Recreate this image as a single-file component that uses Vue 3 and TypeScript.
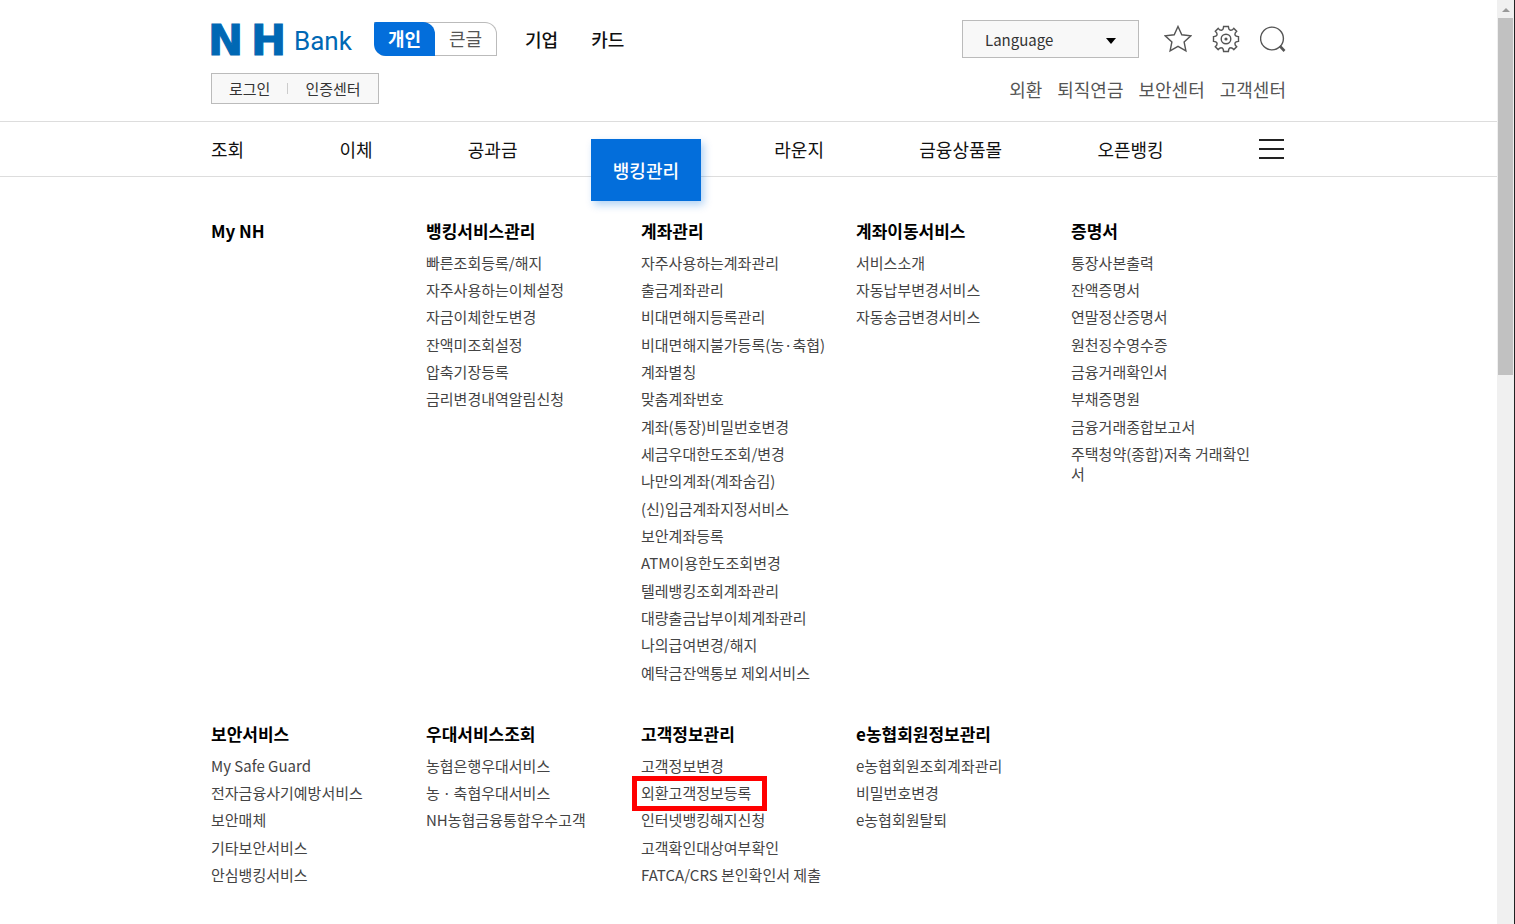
<script setup lang="ts">
import { ref } from 'vue'

interface MenuSection {
  title: string
  items: string[]
}

const language = ref('Language')
const utilityLinks: string[] = ['외환', '퇴직연금', '보안센터', '고객센터']
const mainMenu: string[] = ['조회', '이체', '공과금', '뱅킹관리', '라운지', '금융상품몰', '오픈뱅킹']
const activeMenu = '뱅킹관리'
const markedItem = '외환고객정보등록'

const sections: MenuSection[] = [
  { title: 'My NH', items: [] },
  {
    title: '뱅킹서비스관리',
    items: ['빠른조회등록/해지', '자주사용하는이체설정', '자금이체한도변경', '잔액미조회설정', '압축기장등록', '금리변경내역알림신청'],
  },
  {
    title: '계좌관리',
    items: [
      '자주사용하는계좌관리', '출금계좌관리', '비대면해지등록관리', '비대면해지불가등록(농·축협)',
      '계좌별칭', '맞춤계좌번호', '계좌(통장)비밀번호변경', '세금우대한도조회/변경',
      '나만의계좌(계좌숨김)', '(신)입금계좌지정서비스', '보안계좌등록', 'ATM이용한도조회변경',
      '텔레뱅킹조회계좌관리', '대량출금납부이체계좌관리', '나의급여변경/해지', '예탁금잔액통보 제외서비스',
    ],
  },
  { title: '계좌이동서비스', items: ['서비스소개', '자동납부변경서비스', '자동송금변경서비스'] },
  {
    title: '증명서',
    items: [
      '통장사본출력', '잔액증명서', '연말정산증명서', '원천징수영수증', '금융거래확인서',
      '부채증명원', '금융거래종합보고서', '주택청약(종합)저축 거래확인서',
    ],
  },
  { title: '보안서비스', items: ['My Safe Guard', '전자금융사기예방서비스', '보안매체', '기타보안서비스', '안심뱅킹서비스'] },
  { title: '우대서비스조회', items: ['농협은행우대서비스', '농ㆍ축협우대서비스', 'NH농협금융통합우수고객'] },
  {
    title: '고객정보관리',
    items: ['고객정보변경', '외환고객정보등록', '인터넷뱅킹해지신청', '고객확인대상여부확인', 'FATCA/CRS 본인확인서 제출'],
  },
  { title: 'e농협회원정보관리', items: ['e농협회원조회계좌관리', '비밀번호변경', 'e농협회원탈퇴'] },
]
</script>

<template>
  <div class="window">
    <div class="page">
      <header class="wrap header">
        <div class="row top-row">
          <a href="#" class="logo" aria-label="NH Bank">
            <svg width="142" height="36" viewBox="0 0 142 36">
              <text x="-3 40" y="34" class="logo-nh">NH</text>
              <text x="83" y="29" class="logo-bank">Bank</text>
            </svg>
          </a>
          <div class="mode">
            <a href="#" class="mode-on">개인</a>
            <a href="#" class="mode-off">큰글</a>
          </div>
          <a href="#" class="site">기업</a>
          <a href="#" class="site">카드</a>
          <div class="tools">
            <div class="language">
              <select v-model="language" aria-label="Language">
                <option>Language</option>
              </select>
              <svg class="caret" width="10" height="6" viewBox="0 0 10 6"><path d="M0 0h10L5 6z" /></svg>
            </div>
            <button type="button" aria-label="즐겨찾기">
              <svg width="28" height="28" viewBox="0 0 28 28">
                <path d="M14 1.5 17.8 9.8 26.8 10.8 20.1 17 21.9 25.9 14 21.4 6.1 25.9 7.9 17 1.2 10.8 10.2 9.8Z" />
              </svg>
            </button>
            <button type="button" aria-label="설정">
              <svg width="28" height="28" viewBox="0 0 28 28">
                <path d="M11.6 1.5h4.8q.2 3.6 2.2 3.8 1.6.2 3.2-1.9l2.9 2.9q-2 1.8-1.8 3.2.3 2 3.6 2.1v4.8q-3.3.2-3.6 2.1-.2 1.5 1.8 3.2l-2.9 2.9q-1.7-2-3.2-1.8-2 .2-2.2 3.7h-4.8q-.2-3.5-2.2-3.7-1.5-.2-3.2 1.8l-2.9-2.9q2-1.7 1.8-3.2-.3-1.9-3.6-2.1v-4.8q3.3-.1 3.6-2.1.2-1.4-1.8-3.2l2.9-2.9q1.6 2.1 3.2 1.9 2-.2 2.2-3.8Z" />
                <circle cx="14" cy="14" r="4.8" />
                <circle cx="14" cy="14" r="1.6" class="dot" />
              </svg>
            </button>
            <button type="button" aria-label="검색">
              <svg width="26" height="28" viewBox="2 0 26 28">
                <circle cx="14" cy="13.5" r="11.4" />
                <path d="m21.8 21 4.7 5" class="handle" />
              </svg>
            </button>
          </div>
        </div>
        <div class="row sub-row">
          <div class="login">
            <a href="#">로그인</a>
            <span class="divider"></span>
            <a href="#">인증센터</a>
          </div>
          <nav class="utility" aria-label="서비스">
            <a v-for="link in utilityLinks" :key="link" href="#">{{ link }}</a>
          </nav>
        </div>
      </header>

      <nav class="main-nav" aria-label="주 메뉴">
        <div class="wrap nav-row">
          <a v-for="menu in mainMenu" :key="menu" href="#" :class="{ active: menu === activeMenu }">{{ menu }}</a>
          <button type="button" class="all-menu" aria-label="전체메뉴">
            <span></span><span></span><span></span>
          </button>
        </div>
      </nav>

      <main class="wrap sections">
        <section v-for="section in sections" :key="section.title">
          <h2>{{ section.title }}</h2>
          <ul v-if="section.items.length">
            <li v-for="item in section.items" :key="item">
              <a href="#" :class="{ marked: item === markedItem }">{{ item }}</a>
            </li>
          </ul>
        </section>
      </main>
    </div>

    <div class="scrollbar" aria-hidden="true">
      <svg width="8" height="4" viewBox="0 0 8 4"><path d="M4 0 8 4H0z" /></svg>
      <div class="thumb"></div>
    </div>
  </div>
</template>

<style>
body {
  margin: 0;
  overflow: hidden;
  background: #fff;
}
</style>

<style scoped>
.window {
  display: flex;
  height: 100vh;
  font-family: 'Noto Sans CJK KR', 'Noto Sans', sans-serif;
  color: #111;
}
a {
  color: inherit;
  text-decoration: none;
}
button {
  padding: 0;
  border: 0;
  background: none;
  cursor: pointer;
}
svg {
  display: block;
}
.page {
  flex: 1;
  min-width: 0;
  overflow: hidden;
}
.wrap {
  max-width: 1075px;
  margin: 0 auto;
}
.header {
  padding: 20px 0 17px;
}
.row {
  display: flex;
  align-items: center;
}
.top-row {
  height: 38px;
}
.logo {
  margin-right: 21px;
}
.logo svg {
  overflow: visible;
}
.logo-nh {
  font: bold 42px 'DejaVu Sans', sans-serif;
  fill: #0068b4;
  stroke: #0068b4;
  stroke-width: 1px;
}
.logo-bank {
  font: 26px Roboto, sans-serif;
  fill: #0068b4;
}
.mode {
  display: flex;
  box-sizing: border-box;
  height: 34px;
  border: 1px solid #bbb;
  border-left: 0;
  border-radius: 0 12px 0 12px;
  font-size: 18px;
  line-height: 30px;
  text-align: center;
}
.mode-on {
  width: 61px;
  margin: -1px 0;
  border-radius: 2px 12px 0 12px;
  background: #036edb;
  color: #fff;
  font-weight: 700;
  line-height: 32px;
}
.mode-off {
  width: 61px;
  color: #555;
}
.site {
  margin-left: 28px;
  font-size: 18px;
  font-weight: 500;
  line-height: 26px;
}
.site + .site {
  margin-left: 33px;
}
.tools {
  display: flex;
  align-items: center;
  gap: 20px;
  margin-left: auto;
}
.tools button svg {
  fill: none;
  stroke: #555;
  stroke-width: 1.4;
}
.tools .dot {
  fill: #555;
  stroke: none;
}
.tools .handle {
  stroke-width: 2.6;
}
.language {
  position: relative;
  margin-right: 5px;
}
.language select {
  display: block;
  appearance: none;
  box-sizing: border-box;
  width: 177px;
  height: 38px;
  padding: 0 22px;
  border: 1px solid #bbb;
  border-radius: 0;
  background: #f8f8f8;
  color: #333;
  font: 15px 'Noto Sans CJK KR', sans-serif;
}
.caret {
  position: absolute;
  top: 18px;
  right: 23px;
  pointer-events: none;
}
.sub-row {
  justify-content: space-between;
  margin-top: 15px;
}
.login {
  display: flex;
  align-items: center;
  box-sizing: border-box;
  height: 31px;
  padding: 0 17px;
  border: 1px solid #bbb;
  background: #f8f8f8;
  color: #333;
  font-size: 15px;
  line-height: 20px;
}
.divider {
  width: 1px;
  height: 11px;
  margin: 0 17px;
  background: #ccc;
}
.utility {
  display: flex;
  gap: 15px;
  color: #555;
  font-size: 18px;
  line-height: 26px;
}
.main-nav {
  border-top: 1px solid #ddd;
  border-bottom: 1px solid #ddd;
}
.nav-row {
  display: flex;
  align-items: center;
  justify-content: space-between;
  height: 54px;
  font-size: 18px;
  line-height: 26px;
}
.nav-row .active {
  align-self: flex-start;
  margin: 17px -22px 0;
  padding: 0 22px;
  background: #036edb;
  box-shadow: 3px 4px 8px rgba(3, 110, 219, 0.3);
  color: #fff;
  font-weight: 500;
  line-height: 62px;
}
.all-menu {
  display: flex;
  flex-direction: column;
  gap: 7px;
  margin-right: 2px;
}
.all-menu span {
  width: 25px;
  height: 2px;
  background: #222;
}
.sections {
  display: grid;
  grid-template-columns: repeat(5, 1fr);
  row-gap: 39px;
  padding-top: 42px;
}
section {
  min-width: 0;
  padding-right: 26px;
}
h2 {
  margin: 0 0 10px;
  color: #000;
  font-size: 17px;
  font-weight: 700;
  line-height: 24px;
  white-space: nowrap;
}
ul {
  margin: 0;
  padding: 0;
  list-style: none;
}
li {
  margin-bottom: 7px;
  color: #444;
  font-size: 15px;
  line-height: 20px;
  word-break: break-all;
}
li:nth-child(3n) {
  margin-bottom: 8px;
}
li:last-child {
  margin-bottom: 0;
}
.marked {
  position: relative;
}
.marked::after {
  content: '';
  position: absolute;
  inset: -6px -16px -8px -9px;
  border: 5px solid #f00;
}
.scrollbar {
  display: flex;
  flex-direction: column;
  align-items: center;
  box-sizing: border-box;
  width: 18px;
  border-right: 1px solid #222;
  background: #f0f0f0;
}
.scrollbar svg {
  margin: 8px 0 6px;
  fill: #999;
}
.thumb {
  width: 15px;
  height: 357px;
  background: #c1c1c1;
}
</style>
